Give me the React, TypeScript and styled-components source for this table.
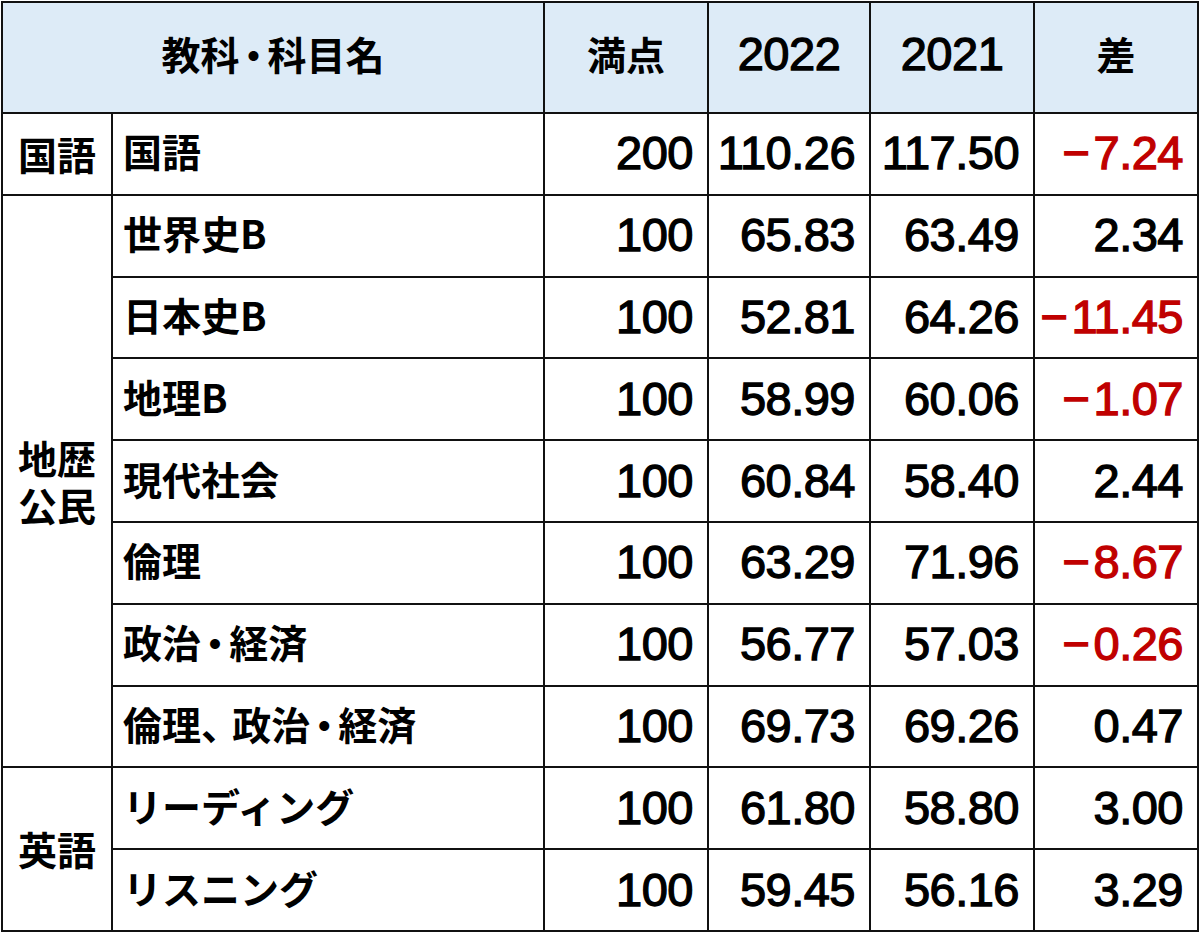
import React from "react";
import styled, { createGlobalStyle } from "styled-components";

const GlobalStyle = createGlobalStyle`
  html, body {
    margin: 0;
    padding: 0;
    background: #ffffff;
  }
`;

const JP = `"Noto Sans CJK JP", "Noto Sans", sans-serif`;
const NUM = `"Liberation Sans", Arial, "Noto Sans CJK JP", sans-serif`;

const Page = styled.div`
  width: 1200px;
  height: 940px;
  background: #ffffff;
  overflow: hidden;
`;

const Table = styled.table`
  border-collapse: collapse;
  table-layout: fixed;
  width: 1198px;
  margin: 1px 0 0 1px;
  color: #000;
`;

const HeadRow = styled.tr`
  height: 111px;
`;

const BodyRow = styled.tr`
  height: 81.8px;
`;

const HeadCell = styled.th<{ $num?: boolean }>`
  background: #ddebf7;
  border: 2px solid #111;
  font-family: ${(p) => (p.$num ? NUM : JP)};
  font-size: ${(p) => (p.$num ? "47px" : "39px")};
  font-weight: ${(p) => (p.$num ? 400 : 700)};
  -webkit-text-stroke: ${(p) => (p.$num ? "1.3px #000" : "0")};
  letter-spacing: ${(p) => (p.$num ? "-0.5px" : "0")};
  line-height: 1;
  text-align: center;
  vertical-align: middle;
  padding: 0 0 8px 0;
`;

const GroupCell = styled.td`
  border: 2px solid #111;
  font-family: ${JP};
  font-size: 39px;
  font-weight: 700;
  line-height: 1.22;
  text-align: center;
  vertical-align: middle;
  padding: 0;
`;

const NameCell = styled.td`
  border: 2px solid #111;
  font-family: ${JP};
  font-size: 39px;
  font-weight: 700;
  line-height: 1;
  text-align: left;
  vertical-align: middle;
  padding: 0 0 6px 10px;
  white-space: nowrap;
`;

const Dot = styled.span`
  margin: 0 -0.14em;
`;

const Comma = styled.span`
  margin-right: -0.2em;
`;

const NumCell = styled.td<{ $neg?: boolean }>`
  border: 2px solid #111;
  font-family: ${NUM};
  font-size: 47px;
  font-weight: 400;
  -webkit-text-stroke: 1.3px ${(p) => (p.$neg ? "#c00000" : "#000")};
  letter-spacing: -0.5px;
  line-height: 1;
  text-align: right;
  vertical-align: middle;
  padding: 0 14px 2px 0;
  white-space: nowrap;
  color: ${(p) => (p.$neg ? "#c00000" : "#000")};
`;

const Minus = styled.span`
  margin-right: 4px;
`;

type Row = {
  group?: string[];
  span?: number;
  name: string;
  full: string;
  y2022: string;
  y2021: string;
  diff: string;
};

const rows: Row[] = [
  { group: ["国語"], span: 1, name: "国語", full: "200", y2022: "110.26", y2021: "117.50", diff: "−7.24" },
  { group: ["地歴", "公民"], span: 7, name: "世界史B", full: "100", y2022: "65.83", y2021: "63.49", diff: "2.34" },
  { name: "日本史B", full: "100", y2022: "52.81", y2021: "64.26", diff: "−11.45" },
  { name: "地理B", full: "100", y2022: "58.99", y2021: "60.06", diff: "−1.07" },
  { name: "現代社会", full: "100", y2022: "60.84", y2021: "58.40", diff: "2.44" },
  { name: "倫理", full: "100", y2022: "63.29", y2021: "71.96", diff: "−8.67" },
  { name: "政治・経済", full: "100", y2022: "56.77", y2021: "57.03", diff: "−0.26" },
  { name: "倫理、政治・経済", full: "100", y2022: "69.73", y2021: "69.26", diff: "0.47" },
  { group: ["英語"], span: 2, name: "リーディング", full: "100", y2022: "61.80", y2021: "58.80", diff: "3.00" },
  { name: "リスニング", full: "100", y2022: "59.45", y2021: "56.16", diff: "3.29" },
];

// narrow the full-width punctuation the way the original sheet renders it
function renderName(name: string) {
  return name.split(/([・、])/).map((part, i) => {
    if (part === "・") return <Dot key={i}>・</Dot>;
    if (part === "、") return <Comma key={i}>、</Comma>;
    return part;
  });
}

function renderDiff(diff: string) {
  if (!diff.startsWith("−")) return diff;
  return (
    <>
      <Minus>−</Minus>
      {diff.slice(1)}
    </>
  );
}

export default function App() {
  return (
    <Page>
      <GlobalStyle />
      <Table>
        <colgroup>
          <col style={{ width: 110 }} />
          <col style={{ width: 432 }} />
          <col style={{ width: 164 }} />
          <col style={{ width: 162 }} />
          <col style={{ width: 164 }} />
          <col style={{ width: 164 }} />
        </colgroup>
        <thead>
          <HeadRow>
            <HeadCell colSpan={2}>{renderName("教科・科目名")}</HeadCell>
            <HeadCell>満点</HeadCell>
            <HeadCell $num>2022</HeadCell>
            <HeadCell $num>2021</HeadCell>
            <HeadCell>差</HeadCell>
          </HeadRow>
        </thead>
        <tbody>
          {rows.map((r) => (
            <BodyRow key={r.name}>
              {r.group && (
                <GroupCell rowSpan={r.span}>
                  {r.group.map((line) => (
                    <div key={line}>{line}</div>
                  ))}
                </GroupCell>
              )}
              <NameCell>{renderName(r.name)}</NameCell>
              <NumCell>{r.full}</NumCell>
              <NumCell>{r.y2022}</NumCell>
              <NumCell>{r.y2021}</NumCell>
              <NumCell $neg={r.diff.startsWith("−")}>{renderDiff(r.diff)}</NumCell>
            </BodyRow>
          ))}
        </tbody>
      </Table>
    </Page>
  );
}
